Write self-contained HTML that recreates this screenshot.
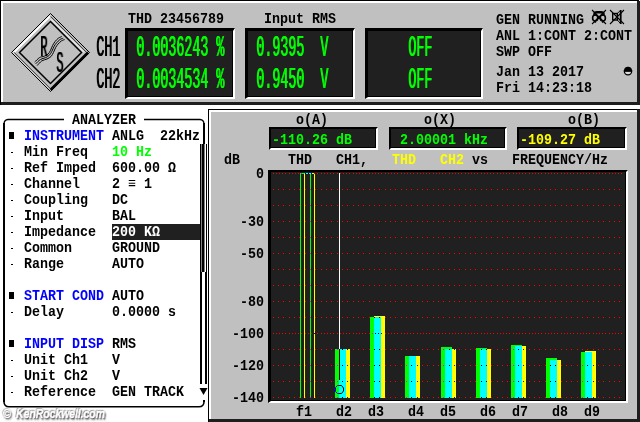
<!DOCTYPE html>
<html><head><meta charset="utf-8"><title>Audio Analyzer</title>
<style>
html,body{margin:0;padding:0;}
body{width:640px;height:422px;background:#fff;position:relative;overflow:hidden;font-family:"Liberation Mono",monospace;}
div{position:absolute;box-sizing:border-box;}
.t{font:bold 13.333px/16px "Liberation Mono",monospace;white-space:pre;transform-origin:0 0;transform:scaleY(1.12);will-change:transform;}
.tall{font:13.333px/16px "Liberation Mono",monospace;white-space:pre;transform-origin:0 0;transform:scaleY(2.25);text-shadow:0.8px 0 0 currentColor;will-change:transform;}
.tall.rs{transform:scale(0.9,2.25);}
.box{background:#000;border-style:solid;border-color:#000 #fff #fff #000;border-width:3px 2px 2px 3px;}
.box i{position:absolute;left:0;top:0;right:1px;bottom:1px;background:#202020;}
.box.b2{border-width:2px 2px 2px 2px;}
svg{position:absolute;left:0;top:0;}
.wm{font:italic bold 13px/16px 'Liberation Sans',sans-serif;color:#fff;letter-spacing:-0.2px;white-space:pre;transform-origin:0 0;transform:scaleX(0.82);will-change:transform;-webkit-text-stroke:0.5px #fff;text-shadow:1px 1px 1px #555,0 0 2px #666,1.5px 1.5px 2px #777,-1px -1px 1px #999;}
</style></head><body>
<div style="left:0;top:0;width:640px;height:105px;background:#1e1e1e"></div>
<div style="left:0;top:0;width:639px;height:102px;background:#000"></div>
<div style="left:1px;top:1px;width:636px;height:101px;background:#fff"></div>
<div style="left:3px;top:3px;width:634px;height:99px;background:#c0c0c0"></div>
<div style="left:639px;top:0;width:1px;height:1px;background:#fff"></div>
<div style="left:637px;top:1px;width:3px;height:104px;background:#1e1e1e"></div>
<div style="left:0;top:102px;width:1px;height:3px;background:#000"></div>
<div class="box" style="left:125px;top:28px;width:110px;height:71px"><i></i></div>
<div class="box" style="left:245px;top:28px;width:110px;height:71px"><i></i></div>
<div class="box" style="left:365px;top:28px;width:118px;height:71px"><i></i></div>
<div class="t" style="left:128px;top:10.92px;color:#000;">THD 23456789</div>
<div class="t" style="left:264px;top:10.92px;color:#000;">Input RMS</div>
<div class="tall" style="left:96px;top:30.81px;color:#000">CH1</div>
<div class="tall" style="left:96px;top:62.81px;color:#000">CH2</div>
<div class="tall" style="left:136px;top:30.81px;color:#0f0">0.0036243 %</div>
<div class="tall" style="left:136px;top:62.81px;color:#0f0">0.0034534 %</div>
<div class="tall" style="left:256px;top:30.81px;color:#0f0">0.9395  V</div>
<div class="tall" style="left:256px;top:62.81px;color:#0f0">0.9450  V</div>
<div class="tall" style="left:408px;top:30.81px;color:#0f0">OFF</div>
<div class="tall" style="left:408px;top:62.81px;color:#0f0">OFF</div>
<div class="t" style="left:496px;top:11.92px;color:#000;">GEN RUNNING</div>
<div class="t" style="left:496px;top:27.92px;color:#000;">ANL 1:CONT 2:CONT</div>
<div class="t" style="left:496px;top:43.92px;color:#000;">SWP OFF</div>
<div class="t" style="left:496px;top:63.92px;color:#000;">Jan 13 2017</div>
<div class="t" style="left:496px;top:79.92px;color:#000;">Fri 14:23:18</div>
<svg width="640" height="104" viewBox="0 0 640 104">
<g fill="none" stroke="#000" stroke-width="1">
<polygon points="50.5,13.5 89.5,52.5 50.5,91.5 11.5,52.5" stroke-width="1"/>
<path d="M13.75,52.5 L50.5,15.75" stroke="#fff" stroke-width="1.9"/>
<path d="M50.5,16.299999999999997 L86.7,52.5" stroke="#000" stroke-width="0.8"/>
<path d="M50.5,18.700000000000003 L84.3,52.5" stroke="#e4e4e4" stroke-width="1.6"/>
<path d="M88.1,52.5 L50.5,90.1" stroke="#000" stroke-width="2.8"/>
<path d="M50.5,90.1 L12.899999999999999,52.5" stroke="#eee" stroke-width="0.9"/>
<path d="M50.5,88.8 L14.200000000000003,52.5" stroke="#000" stroke-width="0.8"/>
<polygon points="50.5,21.5 81.5,52.5 50.5,83.5 19.5,52.5" stroke="#000" stroke-width="1.5"/>
<g stroke="#000" stroke-width="1">
<path d="M34.7,62.1 C35.5,61.4 37.9,58.6 39.5,57.6 C41.1,56.6 42.8,56.8 44.2,56.2 C45.6,55.7 47.0,55.2 48.0,54.3 C49.0,53.3 49.6,52.0 50.4,50.5 C51.2,49.0 51.9,46.8 52.7,45.3 C53.5,43.8 54.2,42.7 55.1,41.5 C56.0,40.3 57.3,39.0 58.4,38.2 C59.5,37.4 61.2,36.8 61.8,36.5"/>
<path d="M35.7,63.8 C36.5,63.0 38.8,60.5 40.4,59.5 C42.0,58.5 44.1,58.3 45.6,57.6 C47.1,56.9 48.4,56.2 49.4,55.2 C50.4,54.2 51.0,52.9 51.8,51.4 C52.6,49.9 53.4,47.6 54.2,46.2 C55.0,44.8 55.5,44.0 56.5,42.9 C57.5,41.8 58.8,40.4 59.9,39.6 C61.0,38.8 62.7,38.4 63.2,38.2"/>
<path d="M37.1,65.6 C37.9,64.8 40.1,62.0 41.8,60.9 C43.4,59.8 45.5,59.7 47.0,59.0 C48.5,58.3 49.9,57.6 51.0,56.5 C52.1,55.4 52.7,53.9 53.5,52.4 C54.3,50.9 54.9,49.0 55.6,47.6 C56.4,46.2 57.0,45.2 58.0,44.1 C59.0,43.0 60.2,41.8 61.3,41.0 C62.4,40.2 64.0,39.8 64.6,39.6"/>
</g>
</g>

<!-- headphone crossed -->
<g fill="none" stroke="#000" stroke-width="1">
<path d="M592,10 L606,24 M606,10 L592,24" stroke-width="1.1"/>
<path d="M594.6,15.5 V13.6 Q594.6,12.2 597,12.2 H601 Q603.4,12.2 603.4,13.6 V15.5" stroke-width="2.6"/>
<ellipse cx="595.2" cy="18" rx="2.6" ry="3" stroke-width="1.6"/>
<ellipse cx="602.8" cy="18" rx="2.6" ry="3" stroke-width="1.6"/>
<path d="M594.5,20.5 L595.5,22.8 M603.5,20.5 L602.5,22.8" stroke-width="1.6"/>
<rect x="598" y="17" width="2" height="2" fill="#000" stroke="none"/>
<path d="M610,10 L624,24 M624,10 L610,24" stroke-width="1.1"/>
<rect x="612.7" y="13.5" width="4.6" height="6.5" stroke-width="1.4"/>
<path d="M617.3,13.5 L620.5,10.3 M617.3,20 L620.5,23.5" stroke-width="1"/>
<path d="M620.7,10 V24" stroke-width="1.8"/>
</g>
<g>
<path d="M624.3,71 A3.7,3.9 0 0 0 631.7,71 Z" fill="#ddd" stroke="#000" stroke-width="1.3"/>
<path d="M624.3,71 A3.7,3.9 0 0 1 631.7,71 Z" fill="#000" stroke="#000" stroke-width="1"/>
</g>
</svg>
<div class="tall rs" style="left:40.3px;top:30.81px;color:#000">R</div>
<div class="tall rs" style="left:56.3px;top:46.81px;color:#000">S</div>
<svg width="210" height="422" viewBox="0 0 210 422" style="top:0">
<g fill="none" stroke="#000">
<path d="M4,123 V402 M204,402 V400" stroke-width="2"/>
<path d="M4,402 Q4.2,406.6 9,406.8 H199 Q203.8,406.6 204,402" stroke-width="1.6"/>
<path d="M204,123 V144" stroke-width="2"/>
<path d="M64,119.5 H8 Q4.2,119.8 4,124" stroke-width="1.3"/>
<path d="M144,119.5 H200 Q203.8,119.8 204,124" stroke-width="1.3"/>
<path d="M200.5,144 V272 M206.5,144 V272" stroke-width="1"/>
<path d="M203,144 V272" stroke-width="3"/>
<path d="M201,272 V384 M206,272 V384" stroke-width="2"/>
<path d="M199.5,388 H207.5 L203.5,395 Z" fill="#000" stroke="none"/>
</g></svg>
<div class="t" style="left:72px;top:111.92px;color:#000;">ANALYZER</div>
<div style="left:9px;top:132px;width:5px;height:7px;background:#000"></div>
<div class="t" style="left:24px;top:127.92px;color:#00f;">INSTRUMENT</div>
<div class="t" style="left:112px;top:127.92px;color:#000;">ANLG  22kHz</div>
<div style="left:11px;top:152px;width:2px;height:1px;background:#000"></div>
<div class="t" style="left:24px;top:143.92px;color:#000;">Min Freq</div>
<div class="t" style="left:112px;top:143.92px;color:#0f0;">10 Hz</div>
<div style="left:11px;top:168px;width:2px;height:1px;background:#000"></div>
<div class="t" style="left:24px;top:159.92px;color:#000;">Ref Imped</div>
<div class="t" style="left:112px;top:159.92px;color:#000;">600.00 Ω</div>
<div style="left:11px;top:184px;width:2px;height:1px;background:#000"></div>
<div class="t" style="left:24px;top:175.92px;color:#000;">Channel</div>
<div class="t" style="left:112px;top:175.92px;color:#000;">2 ≡ 1</div>
<div style="left:11px;top:200px;width:2px;height:1px;background:#000"></div>
<div class="t" style="left:24px;top:191.92px;color:#000;">Coupling</div>
<div class="t" style="left:112px;top:191.92px;color:#000;">DC</div>
<div style="left:11px;top:216px;width:2px;height:1px;background:#000"></div>
<div class="t" style="left:24px;top:207.92px;color:#000;">Input</div>
<div class="t" style="left:112px;top:207.92px;color:#000;">BAL</div>
<div style="left:11px;top:232px;width:2px;height:1px;background:#000"></div>
<div style="left:112px;top:224px;width:88px;height:16px;background:#202020"></div>
<div class="t" style="left:24px;top:223.92px;color:#000;">Impedance</div>
<div class="t" style="left:112px;top:223.92px;color:#fff;">200 KΩ</div>
<div style="left:11px;top:248px;width:2px;height:1px;background:#000"></div>
<div class="t" style="left:24px;top:239.92px;color:#000;">Common</div>
<div class="t" style="left:112px;top:239.92px;color:#000;">GROUND</div>
<div style="left:11px;top:264px;width:2px;height:1px;background:#000"></div>
<div class="t" style="left:24px;top:255.92px;color:#000;">Range</div>
<div class="t" style="left:112px;top:255.92px;color:#000;">AUTO</div>
<div style="left:9px;top:292px;width:5px;height:7px;background:#000"></div>
<div class="t" style="left:24px;top:287.92px;color:#00f;">START COND</div>
<div class="t" style="left:112px;top:287.92px;color:#000;">AUTO</div>
<div style="left:11px;top:312px;width:2px;height:1px;background:#000"></div>
<div class="t" style="left:24px;top:303.92px;color:#000;">Delay</div>
<div class="t" style="left:112px;top:303.92px;color:#000;">0.0000 s</div>
<div style="left:9px;top:340px;width:5px;height:7px;background:#000"></div>
<div class="t" style="left:24px;top:335.92px;color:#00f;">INPUT DISP</div>
<div class="t" style="left:112px;top:335.92px;color:#000;">RMS</div>
<div style="left:11px;top:360px;width:2px;height:1px;background:#000"></div>
<div class="t" style="left:24px;top:351.92px;color:#000;">Unit Ch1</div>
<div class="t" style="left:112px;top:351.92px;color:#000;">V</div>
<div style="left:11px;top:376px;width:2px;height:1px;background:#000"></div>
<div class="t" style="left:24px;top:367.92px;color:#000;">Unit Ch2</div>
<div class="t" style="left:112px;top:367.92px;color:#000;">V</div>
<div style="left:11px;top:392px;width:2px;height:1px;background:#000"></div>
<div class="t" style="left:24px;top:383.92px;color:#000;">Reference</div>
<div class="t" style="left:112px;top:383.92px;color:#000;">GEN TRACK</div>
<div class="wm" style="left:3px;top:406px;">©</div><div class="wm" style="left:16px;top:406px;">KenRockwell.com</div>
<div style="left:208px;top:109px;width:432px;height:313px;background:#1e1e1e"></div>
<div style="left:208px;top:109px;width:429px;height:1px;background:#000"></div>
<div style="left:208px;top:109px;width:1px;height:313px;background:#000"></div>
<div style="left:209px;top:110px;width:428px;height:309px;background:#fff"></div>
<div style="left:211px;top:112px;width:426px;height:307px;background:#c0c0c0"></div>
<div class="t" style="left:296px;top:111.92px;color:#000;">o(A)</div>
<div class="t" style="left:424px;top:111.92px;color:#000;">o(X)</div>
<div class="t" style="left:568px;top:111.92px;color:#000;">o(B)</div>
<div class="box b2" style="left:269px;top:127px;width:109px;height:23px"><i></i></div>
<div class="box b2" style="left:389px;top:127px;width:118px;height:23px"><i></i></div>
<div class="box b2" style="left:517px;top:127px;width:110px;height:23px"><i></i></div>
<div class="t" style="left:272px;top:131.92px;color:#0f0;">-110.26 dB</div>
<div class="t" style="left:400px;top:131.92px;color:#0f0;">2.00001 kHz</div>
<div class="t" style="left:520px;top:131.92px;color:#ff0;">-109.27 dB</div>
<div class="t" style="left:224px;top:151.92px;color:#000;">dB</div>
<div class="t" style="left:288px;top:151.92px;color:#000;">THD</div>
<div class="t" style="left:336px;top:151.92px;color:#000;">CH1,</div>
<div class="t" style="left:392px;top:151.92px;color:#ff0;">THD</div>
<div class="t" style="left:440px;top:151.92px;color:#ff0;">CH2</div>
<div class="t" style="left:472px;top:151.92px;color:#000;">vs</div>
<div class="t" style="left:512px;top:151.92px;color:#000;">FREQUENCY/Hz</div>
<div class="t" style="left:256px;top:165.92px;color:#000;">0</div>
<div class="t" style="left:240px;top:213.92px;color:#000;">-30</div>
<div class="t" style="left:240px;top:245.92px;color:#000;">-50</div>
<div class="t" style="left:240px;top:293.92px;color:#000;">-80</div>
<div class="t" style="left:232px;top:325.92px;color:#000;">-100</div>
<div class="t" style="left:232px;top:357.92px;color:#000;">-120</div>
<div class="t" style="left:232px;top:389.92px;color:#000;">-140</div>
<div class="t" style="left:296px;top:403.92px;color:#000;">f1</div>
<div class="t" style="left:336px;top:403.92px;color:#000;">d2</div>
<div class="t" style="left:368px;top:403.92px;color:#000;">d3</div>
<div class="t" style="left:408px;top:403.92px;color:#000;">d4</div>
<div class="t" style="left:440px;top:403.92px;color:#000;">d5</div>
<div class="t" style="left:480px;top:403.92px;color:#000;">d6</div>
<div class="t" style="left:512px;top:403.92px;color:#000;">d7</div>
<div class="t" style="left:552px;top:403.92px;color:#000;">d8</div>
<div class="t" style="left:584px;top:403.92px;color:#000;">d9</div>
<div class="box" style="left:268px;top:170px;width:360px;height:233px;border-width:2px 2px 2px 3px"><i></i></div>
<svg width="640" height="422" viewBox="0 0 640 422" shape-rendering="crispEdges">
<path d="M273,173.5 H624" stroke="#f00" stroke-dasharray="1 2 1 2 1 2 1 2 1 3"/><path d="M273,189.5 H624" stroke="#f00" stroke-dasharray="1 4 1 4 1 5"/><path d="M273,205.5 H624" stroke="#f00" stroke-dasharray="1 4 1 4 1 5"/><path d="M273,221.5 H624" stroke="#f00" stroke-dasharray="1 4 1 4 1 5"/><path d="M273,237.5 H624" stroke="#f00" stroke-dasharray="1 4 1 4 1 5"/><path d="M273,253.5 H624" stroke="#f00" stroke-dasharray="1 4 1 4 1 5"/><path d="M273,269.5 H624" stroke="#f00" stroke-dasharray="1 4 1 4 1 5"/><path d="M273,285.5 H624" stroke="#f00" stroke-dasharray="1 4 1 4 1 5"/><path d="M273,301.5 H624" stroke="#f00" stroke-dasharray="1 4 1 4 1 5"/><path d="M273,317.5 H624" stroke="#f00" stroke-dasharray="1 4 1 4 1 5"/><path d="M273,333.5 H624" stroke="#f00" stroke-dasharray="1 2 1 2 1 2 1 2 1 3"/><path d="M273,349.5 H624" stroke="#f00" stroke-dasharray="1 4 1 4 1 5"/><path d="M273,365.5 H624" stroke="#f00" stroke-dasharray="1 4 1 4 1 5"/><path d="M273,381.5 H624" stroke="#f00" stroke-dasharray="1 4 1 4 1 5"/><path d="M273,397.5 H624" stroke="#f00" stroke-dasharray="1 4 1 4 1 5"/>
<rect x="335" y="349" width="11" height="49" fill="#0f0"/><rect x="339" y="349" width="11" height="49" fill="#ff0"/><rect x="339" y="349" width="7" height="49" fill="#0ff"/>
<rect x="337" y="349" width="1" height="1" fill="#f0f"/><rect x="342" y="349" width="1" height="1" fill="#000"/><rect x="347" y="349" width="1" height="1" fill="#00f"/><rect x="337" y="365" width="1" height="1" fill="#f0f"/><rect x="342" y="365" width="1" height="1" fill="#000"/><rect x="347" y="365" width="1" height="1" fill="#00f"/><rect x="337" y="381" width="1" height="1" fill="#f0f"/><rect x="342" y="381" width="1" height="1" fill="#000"/><rect x="347" y="381" width="1" height="1" fill="#00f"/><rect x="337" y="397" width="1" height="1" fill="#f0f"/><rect x="342" y="397" width="1" height="1" fill="#000"/><rect x="347" y="397" width="1" height="1" fill="#00f"/>
<rect x="370" y="317" width="11" height="81" fill="#0f0"/><rect x="374" y="316" width="11" height="82" fill="#ff0"/><rect x="374" y="317" width="7" height="81" fill="#0ff"/>
<rect x="374" y="317" width="1" height="1" fill="#000"/><rect x="379" y="317" width="1" height="1" fill="#000"/><rect x="372" y="333" width="1" height="1" fill="#f0f"/><rect x="375" y="333" width="1" height="1" fill="#000"/><rect x="378" y="333" width="1" height="1" fill="#000"/><rect x="381" y="333" width="1" height="1" fill="#00f"/><rect x="374" y="349" width="1" height="1" fill="#000"/><rect x="379" y="349" width="1" height="1" fill="#000"/><rect x="374" y="365" width="1" height="1" fill="#000"/><rect x="379" y="365" width="1" height="1" fill="#000"/><rect x="374" y="381" width="1" height="1" fill="#000"/><rect x="379" y="381" width="1" height="1" fill="#000"/><rect x="374" y="397" width="1" height="1" fill="#000"/><rect x="379" y="397" width="1" height="1" fill="#000"/>
<rect x="405" y="356" width="11" height="42" fill="#0f0"/><rect x="409" y="356" width="11" height="42" fill="#ff0"/><rect x="409" y="356" width="7" height="42" fill="#0ff"/>
<rect x="406" y="365" width="1" height="1" fill="#f0f"/><rect x="411" y="365" width="1" height="1" fill="#000"/><rect x="417" y="365" width="1" height="1" fill="#00f"/><rect x="406" y="381" width="1" height="1" fill="#f0f"/><rect x="411" y="381" width="1" height="1" fill="#000"/><rect x="417" y="381" width="1" height="1" fill="#00f"/><rect x="406" y="397" width="1" height="1" fill="#f0f"/><rect x="411" y="397" width="1" height="1" fill="#000"/><rect x="417" y="397" width="1" height="1" fill="#00f"/>
<rect x="441" y="347" width="11" height="51" fill="#0f0"/><rect x="445" y="349" width="11" height="49" fill="#ff0"/><rect x="445" y="349" width="7" height="49" fill="#0ff"/>
<rect x="443" y="349" width="1" height="1" fill="#f0f"/><rect x="449" y="349" width="1" height="1" fill="#000"/><rect x="454" y="349" width="1" height="1" fill="#00f"/><rect x="443" y="365" width="1" height="1" fill="#f0f"/><rect x="449" y="365" width="1" height="1" fill="#000"/><rect x="454" y="365" width="1" height="1" fill="#00f"/><rect x="443" y="381" width="1" height="1" fill="#f0f"/><rect x="449" y="381" width="1" height="1" fill="#000"/><rect x="454" y="381" width="1" height="1" fill="#00f"/><rect x="443" y="397" width="1" height="1" fill="#f0f"/><rect x="449" y="397" width="1" height="1" fill="#000"/><rect x="454" y="397" width="1" height="1" fill="#00f"/>
<rect x="476" y="348" width="11" height="50" fill="#0f0"/><rect x="480" y="349" width="11" height="49" fill="#ff0"/><rect x="480" y="349" width="7" height="49" fill="#0ff"/>
<rect x="481" y="349" width="1" height="1" fill="#000"/><rect x="486" y="349" width="1" height="1" fill="#000"/><rect x="481" y="365" width="1" height="1" fill="#000"/><rect x="486" y="365" width="1" height="1" fill="#000"/><rect x="481" y="381" width="1" height="1" fill="#000"/><rect x="486" y="381" width="1" height="1" fill="#000"/><rect x="481" y="397" width="1" height="1" fill="#000"/><rect x="486" y="397" width="1" height="1" fill="#000"/>
<rect x="511" y="345" width="11" height="53" fill="#0f0"/><rect x="515" y="346" width="11" height="52" fill="#ff0"/><rect x="515" y="346" width="7" height="52" fill="#0ff"/>
<rect x="513" y="349" width="1" height="1" fill="#f0f"/><rect x="518" y="349" width="1" height="1" fill="#000"/><rect x="523" y="349" width="1" height="1" fill="#00f"/><rect x="513" y="365" width="1" height="1" fill="#f0f"/><rect x="518" y="365" width="1" height="1" fill="#000"/><rect x="523" y="365" width="1" height="1" fill="#00f"/><rect x="513" y="381" width="1" height="1" fill="#f0f"/><rect x="518" y="381" width="1" height="1" fill="#000"/><rect x="523" y="381" width="1" height="1" fill="#00f"/><rect x="513" y="397" width="1" height="1" fill="#f0f"/><rect x="518" y="397" width="1" height="1" fill="#000"/><rect x="523" y="397" width="1" height="1" fill="#00f"/>
<rect x="546" y="358" width="11" height="40" fill="#0f0"/><rect x="550" y="360" width="11" height="38" fill="#ff0"/><rect x="550" y="360" width="7" height="38" fill="#0ff"/>
<rect x="550" y="365" width="1" height="1" fill="#000"/><rect x="555" y="365" width="1" height="1" fill="#000"/><rect x="550" y="381" width="1" height="1" fill="#000"/><rect x="555" y="381" width="1" height="1" fill="#000"/><rect x="550" y="397" width="1" height="1" fill="#000"/><rect x="555" y="397" width="1" height="1" fill="#000"/>
<rect x="581" y="352" width="11" height="46" fill="#0f0"/><rect x="585" y="351" width="11" height="47" fill="#ff0"/><rect x="585" y="352" width="7" height="46" fill="#0ff"/>
<rect x="582" y="365" width="1" height="1" fill="#f0f"/><rect x="587" y="365" width="1" height="1" fill="#000"/><rect x="593" y="365" width="1" height="1" fill="#00f"/><rect x="582" y="381" width="1" height="1" fill="#f0f"/><rect x="587" y="381" width="1" height="1" fill="#000"/><rect x="593" y="381" width="1" height="1" fill="#00f"/><rect x="582" y="397" width="1" height="1" fill="#f0f"/><rect x="587" y="397" width="1" height="1" fill="#000"/><rect x="593" y="397" width="1" height="1" fill="#00f"/>
<path d="M300.5,398 V173.5 H310.5 V398" fill="none" stroke="#0f0"/><path d="M304.5,398 V173.5 H314.5 V398" fill="none" stroke="#ff0"/><path d="M304,173.5 H311" stroke="#0ff"/><rect x="310" y="189" width="1" height="1" fill="#f0f"/><rect x="310" y="205" width="1" height="1" fill="#f0f"/><rect x="310" y="221" width="1" height="1" fill="#f0f"/><rect x="310" y="237" width="1" height="1" fill="#f0f"/><rect x="310" y="253" width="1" height="1" fill="#f0f"/><rect x="310" y="269" width="1" height="1" fill="#f0f"/><rect x="310" y="285" width="1" height="1" fill="#f0f"/><rect x="310" y="301" width="1" height="1" fill="#f0f"/><rect x="310" y="317" width="1" height="1" fill="#f0f"/><rect x="314" y="333" width="1" height="1" fill="#00f"/><rect x="310" y="349" width="1" height="1" fill="#f0f"/><rect x="310" y="365" width="1" height="1" fill="#f0f"/><rect x="310" y="381" width="1" height="1" fill="#f0f"/><rect x="310" y="397" width="1" height="1" fill="#f0f"/><rect x="301" y="173" width="1" height="1" fill="#f0f"/><rect x="305" y="173" width="1" height="1" fill="#000"/><rect x="308" y="173" width="1" height="1" fill="#000"/><rect x="311" y="173" width="1" height="1" fill="#00f"/><rect x="314" y="173" width="1" height="1" fill="#f00"/>
<path d="M339.5,173 V349" stroke="#fff"/><path d="M339.5,349 V380" stroke="#000"/><path d="M339,385.5 H337.5 L335.5,387.5 V391.5 L337.5,393.5 H339" fill="none" stroke="#00f" shape-rendering="auto"/><path d="M339,385.5 H341.5 L343.5,388 V391 L341.5,393.5 H339" fill="none" stroke="#000" shape-rendering="auto"/></svg>
</body></html>
